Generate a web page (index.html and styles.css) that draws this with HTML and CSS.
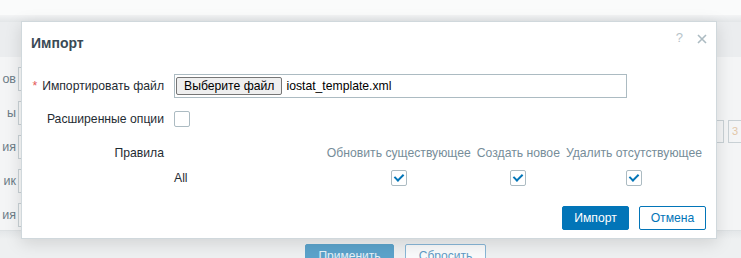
FILE: index.html
```html
<!DOCTYPE html>
<html lang="ru">
<head>
    <meta charset="UTF-8">
    <title>Импорт</title>
    <link rel="stylesheet" href="styles.css">
</head>
<body>
    <div class="page">
        <div class="page-top"></div>
        <div class="page-shade"></div>
        <div class="page-head"></div>
        <div class="page-form">
            <div class="bg-row"><span class="bg-label">ов</span><span class="bg-input"></span></div>
            <div class="bg-row bg-row-right"><span class="bg-label">ы</span><span class="bg-input"></span><span class="bg-right"><span class="bg-small"></span><span class="bg-num">3</span></span></div>
            <div class="bg-row"><span class="bg-label">ия</span><span class="bg-input"></span></div>
            <div class="bg-row"><span class="bg-label">ик</span><span class="bg-input"></span></div>
            <div class="bg-row"><span class="bg-label">ия</span><span class="bg-input"></span></div>
        </div>
        <div class="page-bottom">
            <span class="bg-btn bg-btn-main">Применить</span>
            <span class="bg-btn bg-btn-alt">Сбросить</span>
        </div>

        <div class="dialog">
            <div class="dialog-head">
                <h4>Импорт</h4>
                <div class="dialog-tools">
                    <span class="tool-help">?</span>
                    <svg class="tool-close" width="10" height="10" viewBox="0 0 10 10">
                        <path d="M1 1 L9 9 M9 1 L1 9" stroke="#acbbc2" stroke-width="1.6" fill="none"/>
                    </svg>
                </div>
            </div>
            <div class="dialog-body">
                <div class="form-row">
                    <label class="form-label required">Импортировать файл</label>
                    <div class="file-field">
                        <button type="button" class="file-btn">Выберите файл</button>
                        <span class="file-name">iostat_template.xml</span>
                    </div>
                </div>
                <div class="form-row">
                    <label class="form-label">Расширенные опции</label>
                    <span class="checkbox"></span>
                </div>
                <div class="form-row rules-row">
                    <label class="form-label">Правила</label>
                    <div class="rules">
                        <span></span>
                        <span class="rules-head">Обновить существующее</span>
                        <span class="rules-head">Создать новое</span>
                        <span class="rules-head">Удалить отсутствующее</span>
                        <span class="rules-name">All</span>
                        <span class="rules-cell"><span class="checkbox checked"></span></span>
                        <span class="rules-cell"><span class="checkbox checked"></span></span>
                        <span class="rules-cell"><span class="checkbox checked"></span></span>
                    </div>
                </div>
            </div>
            <div class="dialog-foot">
                <button type="button" class="btn btn-primary">Импорт</button>
                <button type="button" class="btn btn-alt">Отмена</button>
            </div>
        </div>
    </div>
</body>
</html>
```

FILE: styles.css
```css
body {
    margin: 0;
    font-family: "Liberation Sans", Arial, sans-serif;
    font-size: 12px;
    color: #1f2c33;
    background: #f2f3f4;
}
.page {
    position: relative;
    width: 741px;
    height: 258px;
    overflow: hidden;
}
.page-top {
    height: 15px;
    background: #fafbfb;
}
.page-shade {
    height: 7px;
    background: linear-gradient(#f3f4f5, #e3e6e8);
}
.page-head {
    height: 35px;
    background: #ebedef;
}
.page-form {
    height: 174px;
    padding-top: 10px;
    box-sizing: border-box;
    background: #f4f5f6;
    border-bottom: 1px solid #dde1e3;
}
.bg-row {
    display: flex;
    align-items: center;
    height: 24px;
    margin-bottom: 10px;
    gap: 2px;
}
.bg-label {
    width: 16px;
    display: flex;
    justify-content: flex-end;
    white-space: nowrap;
    color: #6c7c86;
    font-size: 12.5px;
}
.bg-input {
    width: 40px;
    height: 22px;
    border: 1px solid #c9d1d5;
    background: #f8f9f9;
}
.bg-row-right {
    position: relative;
}
.bg-right {
    position: absolute;
    left: 696px;
    top: 19px;
    display: flex;
    gap: 4px;
}
.bg-small {
    width: 26px;
    height: 21px;
    border: 1px solid #c9d1d5;
}
.bg-num {
    width: 30px;
    height: 21px;
    border: 1px solid #c9d1d5;
    color: #e2c7a8;
    font-size: 11px;
    line-height: 21px;
    padding-left: 3px;
}
.page-bottom {
    display: flex;
    gap: 11px;
    padding: 13px 0 0 305px;
    background: linear-gradient(#e4e7e9, #eef0f1 8px);
    height: 40px;
}
.bg-btn {
    height: 22px;
    line-height: 22px;
    padding: 0 11px;
    border-radius: 2px;
    font-size: 12px;
}
.bg-btn-main {
    width: 65px;
    text-align: center;
    background: #5ba3cb;
    border: 1px solid #5ba3cb;
    color: #e7f1f7;
}
.bg-btn-alt {
    width: 57px;
    text-align: center;
    background: #f9fafb;
    border: 1px solid #88b7d7;
    color: #5e9ac5;
}

.dialog {
    position: absolute;
    left: 21px;
    top: 21px;
    width: 694px;
    height: 216px;
    background: #fff;
    border: 1px solid #d0d8dc;
    box-shadow: 0 4px 16px rgba(0, 0, 0, 0.13);
    font-size: 12.2px;
}
.dialog-head {
    display: flex;
    justify-content: space-between;
    padding: 12px 9px 0 9px;
    height: 30px;
}
.dialog-head h4 {
    margin: 0;
    font-size: 14px;
    line-height: 18px;
    font-weight: bold;
    color: #3a4a55;
}
.dialog-tools {
    display: flex;
    gap: 14px;
    margin-top: -4px;
}
.tool-help {
    color: #b7c3c9;
    font-size: 13px;
    line-height: 16px;
}
.tool-close {
    margin-top: 4px;
}
.dialog-body {
    padding: 10px 10px 0 9px;
}
.form-row {
    display: grid;
    grid-template-columns: 133px 1fr;
    column-gap: 10px;
    align-items: center;
    min-height: 24px;
    margin-bottom: 9px;
}
.form-label {
    text-align: right;
    color: #1f2c33;
}
.required::before {
    content: "*";
    color: #e45959;
    margin-right: 5px;
}
.file-field {
    display: flex;
    align-items: center;
    width: 451px;
    height: 22px;
    border: 1px solid #acbbc2;
}
.file-btn {
    font-family: "Liberation Sans", Arial, sans-serif;
    font-size: 12.2px;
    height: 18px;
    margin-left: 1px;
    padding: 0 7px;
    border: 1px solid #767676;
    border-radius: 2px;
    background: #efefef;
    color: #000;
}
.file-name {
    margin-left: 4px;
    color: #000;
}
.checkbox {
    display: inline-block;
    width: 14px;
    height: 14px;
    border: 1px solid #acbbc2;
    border-radius: 2px;
    background: #fff;
    position: relative;
    vertical-align: middle;
}
.checked::after {
    content: "";
    position: absolute;
    left: 4px;
    top: 1px;
    width: 4px;
    height: 7px;
    border: solid #0275b8;
    border-width: 0 2px 2px 0;
    transform: rotate(45deg);
}
.rules-row {
    align-items: start;
    margin-top: 13px;
}
.rules-row .form-label {
    line-height: 18px;
}
.rules {
    display: grid;
    grid-template-columns: 1fr auto auto auto;
    width: 531px;
}
.rules-head {
    padding: 0 3px;
    line-height: 18px;
    color: #768d99;
    text-align: center;
    white-space: nowrap;
}
.rules-name {
    margin-top: 4px;
    line-height: 24px;
}
.rules-cell {
    margin-top: 4px;
    height: 24px;
    display: flex;
    align-items: center;
    justify-content: center;
}
.dialog-foot {
    display: flex;
    justify-content: flex-end;
    gap: 10px;
    padding: 7px 10px 0 0;
}
.btn {
    font-family: "Liberation Sans", Arial, sans-serif;
    font-size: 12.2px;
    height: 24px;
    width: 67px;
    border-radius: 2px;
    cursor: pointer;
}
.btn-primary {
    background: #0275b8;
    border: 1px solid #0275b8;
    color: #fff;
}
.btn-alt {
    background: #fff;
    border: 1px solid #0275b8;
    color: #0275b8;
}
```
